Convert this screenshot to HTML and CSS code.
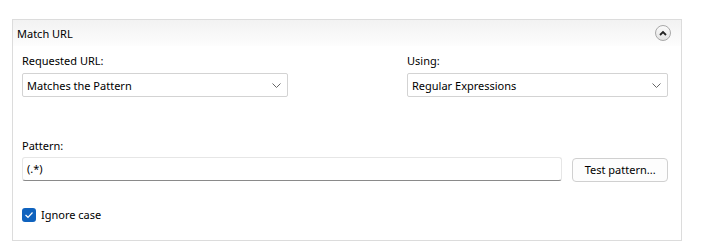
FILE: index.html
```html
<!DOCTYPE html>
<html lang="en">
<head>
    <meta charset="UTF-8">
    <title>Match URL</title>
    <link rel="stylesheet" href="styles.css">
</head>
<body>
    <div class="panel">
        <div class="panel-header">
            <span class="panel-title">Match URL</span>
            <span class="collapse-btn">
                <svg width="8" height="6" viewBox="0 0 8 6"><path d="M1 5 L4 2 L7 5" fill="none" stroke="#222" stroke-width="1.8"/></svg>
            </span>
        </div>
        <div class="panel-body">
            <div class="row">
                <div class="field field-left">
                    <div class="label">Requested URL:</div>
                    <div class="select">
                        <span>Matches the Pattern</span>
                        <svg width="9" height="5" viewBox="0 0 9 5"><path d="M0.5 0.5 L4.5 4.5 L8.5 0.5" fill="none" stroke="#666" stroke-width="1"/></svg>
                    </div>
                </div>
                <div class="field field-right">
                    <div class="label">Using:</div>
                    <div class="select">
                        <span>Regular Expressions</span>
                        <svg width="9" height="5" viewBox="0 0 9 5"><path d="M0.5 0.5 L4.5 4.5 L8.5 0.5" fill="none" stroke="#666" stroke-width="1"/></svg>
                    </div>
                </div>
            </div>
            <div class="pattern-block">
                <div class="label">Pattern:</div>
                <div class="pattern-row">
                    <div class="text-input">(.*)</div>
                    <div class="button">Test pattern...</div>
                </div>
            </div>
            <div class="check-row">
                <span class="checkbox">
                    <svg width="10" height="8" viewBox="0 0 10 8"><path d="M1.5 4 L4 6.3 L8.5 1.5" fill="none" stroke="#fff" stroke-width="1.2"/></svg>
                </span>
                <span>Ignore case</span>
            </div>
        </div>
    </div>
</body>
</html>
```

FILE: styles.css
```css
body, html {
    margin: 0;
    padding: 0;
    background-color: #fff;
    font-family: "Noto Sans", "Open Sans", sans-serif;
    font-size: 11px;
    color: #000;
}
.panel {
    margin: 19px 0 0 12px;
    width: 668px;
    height: 220px;
    border: 1px solid #dcdcdc;
}
.panel-header {
    height: 26px;
    display: flex;
    align-items: center;
    justify-content: space-between;
    padding: 0 10px 0 4px;
    background: linear-gradient(#f2f2f2, #fdfdfd);
}
.panel-title {
    line-height: 16px;
    margin-top: 2px;
}
.collapse-btn {
    width: 14px;
    height: 14px;
    border-radius: 50%;
    border: 1px solid #a8a8a8;
    background: linear-gradient(#fbfbfb, #e2e2e2);
    display: flex;
    align-items: center;
    justify-content: center;
}
.panel-body {
    padding: 7px 13px 0 9px;
}
.row {
    display: flex;
    justify-content: space-between;
}
.field-left {
    width: 266px;
}
.field-right {
    width: 261px;
}
.label {
    line-height: 16px;
    margin-bottom: 4px;
}
.select {
    height: 22px;
    border: 1px solid #d3d3d3;
    border-radius: 2px;
    display: flex;
    align-items: center;
    justify-content: space-between;
    padding: 0 6px 0 4px;
}
.pattern-block {
    margin-top: 41px;
}
.pattern-block .label {
    margin-bottom: 3px;
}
.pattern-row {
    display: flex;
    align-items: flex-start;
    gap: 10px;
}
.text-input {
    width: 532px;
    height: 22px;
    line-height: 21px;
    padding: 0 4px;
    border: 1px solid #e6e6e6;
    border-bottom: 1px solid #8a8a8a;
    border-radius: 3px;
}
.button {
    width: 94px;
    height: 22px;
    margin-top: 1px;
    line-height: 21px;
    text-align: center;
    border: 1px solid #d0d0d0;
    border-radius: 4px;
    background-color: #fdfdfd;
}
.check-row {
    display: flex;
    align-items: center;
    gap: 5px;
    margin-top: 25px;
}
.checkbox {
    width: 14px;
    height: 14px;
    border-radius: 3px;
    background-color: #0f62be;
    display: flex;
    align-items: center;
    justify-content: center;
}
```
